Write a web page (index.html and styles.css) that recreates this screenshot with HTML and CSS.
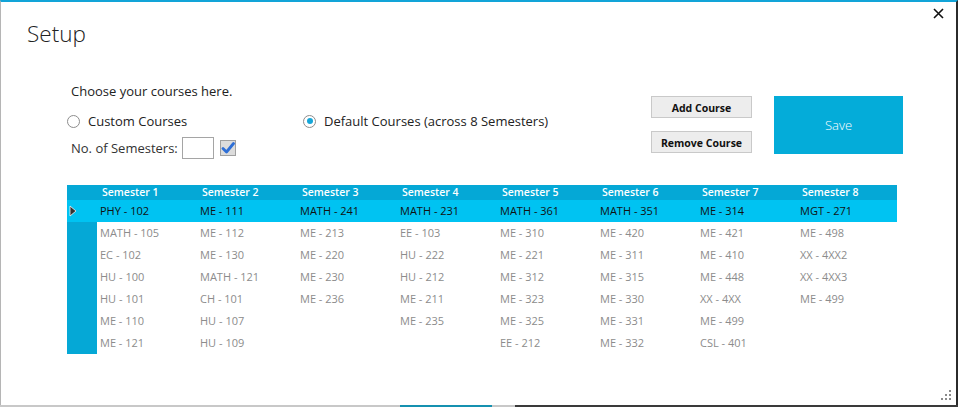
FILE: index.html
```html
<!DOCTYPE html>
<html>
<head>
<meta charset="utf-8">
<link rel="stylesheet" href="styles.css">
</head>
<body>
<div class="window">
  <div class="titlebar">
    <h1 class="title">Setup</h1>
    <button class="close" aria-label="Close">
      <svg width="11" height="11" viewBox="0 0 11 11"><path d="M1 1L10 10M10 1L1 10" stroke="#111" stroke-width="1.6" fill="none"/></svg>
    </button>
  </div>

  <div class="options">
    <div class="col-left">
      <div class="intro">Choose your courses here.</div>
      <label class="radio-row">
        <span class="radio"></span>
        <span>Custom Courses</span>
      </label>
      <div class="sem-row">
        <span class="sem-label">No. of Semesters:</span>
        <span class="textbox"></span>
        <span class="checkbox">
          <svg width="14" height="14" viewBox="0 0 14 14"><path d="M2 7.5L5.5 11L12.5 2.5" stroke="#2f6fd6" stroke-width="2.8" fill="none" stroke-linecap="round" stroke-linejoin="round"/></svg>
        </span>
      </div>
    </div>
    <div class="col-mid">
      <label class="radio-row">
        <span class="radio checked"></span>
        <span>Default Courses (across 8 Semesters)</span>
      </label>
    </div>
    <div class="col-buttons">
      <button class="btn">Add Course</button>
      <button class="btn">Remove Course</button>
    </div>
    <button class="save">Save</button>
  </div>

  <div class="grid">
    <div class="hd corner"></div>
    <div class="hd">Semester 1</div>
    <div class="hd">Semester 2</div>
    <div class="hd">Semester 3</div>
    <div class="hd">Semester 4</div>
    <div class="hd">Semester 5</div>
    <div class="hd">Semester 6</div>
    <div class="hd">Semester 7</div>
    <div class="hd">Semester 8</div>

    <div class="rh sel"><svg width="8" height="12" viewBox="0 0 8 12"><path d="M1 1L7 6L1 11Z" fill="#333" stroke="#f2f2f2" stroke-width="0.8"/></svg></div>
    <div class="cell sel">PHY - 102</div>
    <div class="cell sel">ME - 111</div>
    <div class="cell sel">MATH - 241</div>
    <div class="cell sel">MATH - 231</div>
    <div class="cell sel">MATH - 361</div>
    <div class="cell sel">MATH - 351</div>
    <div class="cell sel">ME - 314</div>
    <div class="cell sel">MGT - 271</div>

    <div class="rh"></div>
    <div class="cell">MATH - 105</div>
    <div class="cell">ME - 112</div>
    <div class="cell">ME - 213</div>
    <div class="cell">EE - 103</div>
    <div class="cell">ME - 310</div>
    <div class="cell">ME - 420</div>
    <div class="cell">ME - 421</div>
    <div class="cell">ME - 498</div>

    <div class="rh"></div>
    <div class="cell">EC - 102</div>
    <div class="cell">ME - 130</div>
    <div class="cell">ME - 220</div>
    <div class="cell">HU - 222</div>
    <div class="cell">ME - 221</div>
    <div class="cell">ME - 311</div>
    <div class="cell">ME - 410</div>
    <div class="cell">XX - 4XX2</div>

    <div class="rh"></div>
    <div class="cell">HU - 100</div>
    <div class="cell">MATH - 121</div>
    <div class="cell">ME - 230</div>
    <div class="cell">HU - 212</div>
    <div class="cell">ME - 312</div>
    <div class="cell">ME - 315</div>
    <div class="cell">ME - 448</div>
    <div class="cell">XX - 4XX3</div>

    <div class="rh"></div>
    <div class="cell">HU - 101</div>
    <div class="cell">CH - 101</div>
    <div class="cell">ME - 236</div>
    <div class="cell">ME - 211</div>
    <div class="cell">ME - 323</div>
    <div class="cell">ME - 330</div>
    <div class="cell">XX - 4XX</div>
    <div class="cell">ME - 499</div>

    <div class="rh"></div>
    <div class="cell">ME - 110</div>
    <div class="cell">HU - 107</div>
    <div class="cell"></div>
    <div class="cell">ME - 235</div>
    <div class="cell">ME - 325</div>
    <div class="cell">ME - 331</div>
    <div class="cell">ME - 499</div>
    <div class="cell"></div>

    <div class="rh"></div>
    <div class="cell">ME - 121</div>
    <div class="cell">HU - 109</div>
    <div class="cell"></div>
    <div class="cell"></div>
    <div class="cell">EE - 212</div>
    <div class="cell">ME - 332</div>
    <div class="cell">CSL - 401</div>
    <div class="cell"></div>
  </div>

  <div class="grip">
    <svg width="12" height="12" viewBox="0 0 12 12" fill="#8a8a8a">
      <rect x="8" y="0" width="2" height="2"/>
      <rect x="4" y="4" width="2" height="2"/><rect x="8" y="4" width="2" height="2"/>
      <rect x="0" y="8" width="2" height="2"/><rect x="4" y="8" width="2" height="2"/><rect x="8" y="8" width="2" height="2"/>
    </svg>
  </div>
</div>
<div class="taskstrip">
  <span class="seg seg-a"></span>
  <span class="seg seg-b"></span>
  <span class="seg seg-c"></span>
  <span class="seg seg-d"></span>
</div>
</body>
</html>
```

FILE: styles.css
```css
html, body {
  margin: 0;
  padding: 0;
  background: #fff;
}
body {
  font-family: "Open Sans", "Noto Sans", "Liberation Sans", sans-serif;
  color: #222;
  width: 958px;
  height: 407px;
  overflow: hidden;
}
.window {
  position: relative;
  box-sizing: border-box;
  width: 958px;
  height: 405px;
  border-top: 2px solid #12a4d8;
  border-left: 1px solid #b5b5b5;
  border-right: 2px solid #2b2b2b;
  background: #fff;
}
.titlebar {
  display: flex;
  justify-content: space-between;
  align-items: flex-start;
  padding: 17px 0 0 26px;
}
.title {
  margin: 0;
  font-weight: 300;
  font-size: 22.5px;
  line-height: 30px;
  color: #222;
}
.close {
  position: absolute;
  top: 6px;
  right: 12px;
  border: 0;
  background: transparent;
  padding: 0;
  width: 11px;
  height: 11px;
  line-height: 0;
}
.options {
  display: flex;
  margin: 33px 0 0 66px;
  font-size: 13px;
}
.col-left {
  width: 236px;
  display: flex;
  flex-direction: column;
}
.intro {
  line-height: 18px;
  padding-left: 4px;
}
.radio-row {
  display: flex;
  align-items: center;
  gap: 8px;
  height: 18px;
  margin-top: 12px;
}
.radio {
  box-sizing: border-box;
  width: 13px;
  height: 13px;
  border-radius: 50%;
  border: 1px solid #8d8d8d;
  background: #fff;
  flex: none;
  position: relative;
}
.radio.checked::after {
  content: "";
  position: absolute;
  left: 2.5px;
  top: 2.5px;
  width: 6px;
  height: 6px;
  border-radius: 50%;
  background: #16a6d8;
}
.sem-row {
  display: flex;
  align-items: center;
  margin-top: 7px;
  height: 22px;
  padding-left: 4px;
}
.sem-label {
  color: #333;
  width: 111px;
}
.textbox {
  box-sizing: border-box;
  width: 32px;
  height: 22px;
  border: 1px solid #a5a5a5;
  background: #fff;
}
.checkbox {
  box-sizing: border-box;
  margin-left: 6px;
  width: 16px;
  height: 16px;
  border: 1px solid #a0a0a0;
  background: #dcdcdc;
  display: flex;
  align-items: center;
  justify-content: center;
}
.col-mid {
  width: 348px;
  padding-top: 18px;
}
.col-mid .radio-row {
  margin-top: 12px;
}
.col-buttons {
  width: 101px;
  padding-top: 14px;
  display: flex;
  flex-direction: column;
  gap: 13px;
}
.btn {
  box-sizing: border-box;
  height: 22px;
  width: 101px;
  border: 1px solid #c9c9c9;
  background: #ededed;
  font-family: "Open Sans", "Noto Sans", sans-serif;
  font-weight: 700;
  font-size: 10.5px;
  color: #111;
  padding: 1px 0 0;
}
.save {
  margin: 14px 0 0 22px;
  width: 129px;
  height: 58px;
  border: 0;
  background: #04acd9;
  color: #fff;
  font-family: "Open Sans", "Noto Sans", sans-serif;
  font-weight: 300;
  font-size: 13px;
  padding: 0;
}
.grid {
  display: grid;
  grid-template-columns: 30px repeat(8, 100px);
  grid-template-rows: 15px repeat(7, 22px);
  margin: 26px 0 0 66px;
  width: 830px;
  font-size: 11px;
}
.hd {
  background: #05a8d6;
  color: #fff;
  font-weight: 600;
  font-size: 10.5px;
  line-height: 15px;
  padding-left: 5px;
  white-space: nowrap;
}
.hd.corner {
  padding: 0;
}
.rh {
  background: #05a8d6;
  display: flex;
  align-items: center;
  padding-left: 2px;
}
.rh.sel {
  background: #00c3f2;
}
.cell {
  color: #8c8c8c;
  line-height: 22px;
  padding-left: 3px;
  white-space: nowrap;
}
.cell.sel {
  background: #00c3f2;
  color: #111;
}
.grip {
  position: absolute;
  right: 3px;
  bottom: 3px;
  line-height: 0;
}
.taskstrip {
  display: flex;
  height: 2px;
}
.seg-a { width: 400px; background: #c8c8c8; }
.seg-b { width: 92px; background: #1591b0; }
.seg-c { width: 23px; background: #c8c8c8; }
.seg-d { flex: 1; background: #3a3a3a; }
```
